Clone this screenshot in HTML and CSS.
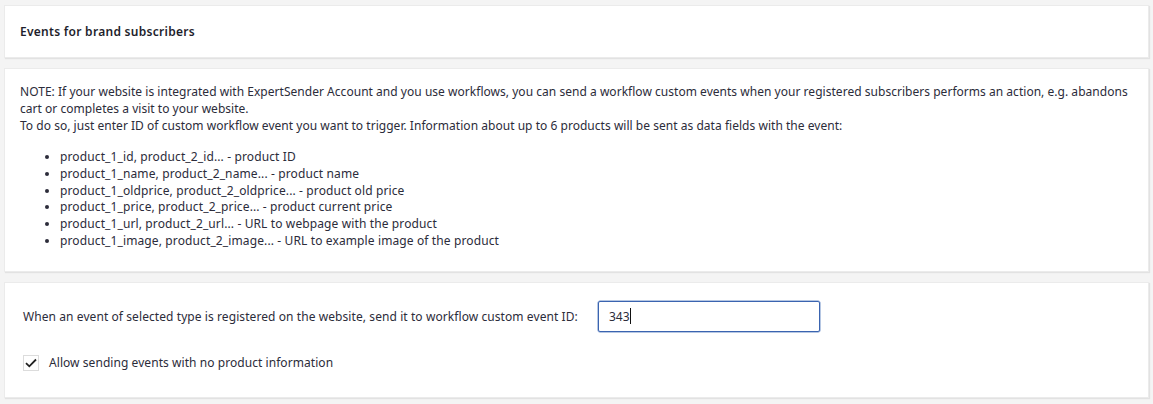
FILE: index.html
```html
<!DOCTYPE html>
<html>
<head>
<meta charset="utf-8">
<link rel="stylesheet" href="styles.css">
</head>
<body>
<div class="page">
  <section class="panel panel-title">
    <h2 class="title">Events for brand subscribers</h2>
  </section>
  <section class="panel panel-note">
    <p class="note">NOTE: If your website is integrated with ExpertSender Account and you use workflows, you can send a workflow custom events when your registered subscribers performs an action, e.g. abandons cart or completes a visit to your website.<br>To do so, just enter ID of custom workflow event you want to trigger. Information about up to 6 products will be sent as data fields with the event:</p>
    <ul class="fields">
      <li>product_1_id, product_2_id... - product ID</li>
      <li>product_1_name, product_2_name... - product name</li>
      <li>product_1_oldprice, product_2_oldprice... - product old price</li>
      <li>product_1_price, product_2_price... - product current price</li>
      <li>product_1_url, product_2_url... - URL to webpage with the product</li>
      <li>product_1_image, product_2_image... - URL to example image of the product</li>
    </ul>
  </section>
  <section class="panel panel-form">
    <div class="row">
      <label class="label" for="evt">When an event of selected type is registered on the website, send it to workflow custom event ID:</label>
      <div class="input"><span class="val">343</span><span class="caret"></span></div>
    </div>
    <div class="check-row">
      <span class="checkbox"><svg width="12" height="10" viewBox="0 0 12 10"><path d="M1 5.2 L4.3 8.3 L11 1.5" fill="none" stroke="#222" stroke-width="1.8"/></svg></span>
      <span class="check-label">Allow sending events with no product information</span>
    </div>
  </section>
</div>
</body>
</html>
```
FILE: styles.css
```css
html, body {
  margin: 0;
  padding: 0;
  background: #f4f4f4;
}
body {
  font-family: "Noto Sans", "Open Sans", "Liberation Sans", sans-serif;
  font-size: 12px;
  color: #2c2c3a;
  width: 1153px;
  height: 404px;
  overflow: hidden;
}
.page {
  padding: 5px 4px 0 4px;
  width: 1145px;
  display: flex;
  flex-direction: column;
  gap: 10px;
}
.panel {
  background: #fff;
  border: 1px solid #ebebeb;
  box-shadow: 1px 1px 1px #e2e2e2;
  box-sizing: border-box;
}
.panel-title {
  height: 53px;
  display: flex;
  align-items: center;
  padding-left: 15px;
}
.title {
  margin: 0;
  font-size: 12px;
  font-weight: 600;
  letter-spacing: 0.28px;
  color: #1e1e2c;
}
.panel-note {
  height: 204px;
  padding: 14px 15px 0 15px;
}
.note {
  margin: 0;
  line-height: 17px;
  letter-spacing: 0.03px;
}
.fields {
  margin: 15px 0 0 0;
  padding-left: 40px;
  line-height: 16.8px;
  letter-spacing: 0.12px;
}
.fields li::marker {
  font-size: 11px;
}
.panel-form {
  height: 116px;
  padding: 17px 0 0 18px;
}
.row {
  display: flex;
  align-items: center;
  height: 32px;
}
.label {
  width: 575px;
  letter-spacing: 0.08px;
}
.input {
  width: 222px;
  height: 31px;
  box-sizing: border-box;
  border: 1px solid #3a64b0;
  border-radius: 2px;
  box-shadow: 0 0 0 0.5px #6f8fc8;
  display: flex;
  align-items: center;
  padding-left: 10px;
}
.caret {
  display: inline-block;
  width: 1px;
  height: 16px;
  background: #111;
}
.check-row {
  display: flex;
  align-items: center;
  margin-top: 22px;
}
.checkbox {
  width: 16px;
  height: 16px;
  box-sizing: border-box;
  border: 1px solid #dcdcdc;
  display: flex;
  align-items: center;
  justify-content: center;
  margin-right: 10px;
}
.check-label {
  letter-spacing: 0.06px;
}
```
